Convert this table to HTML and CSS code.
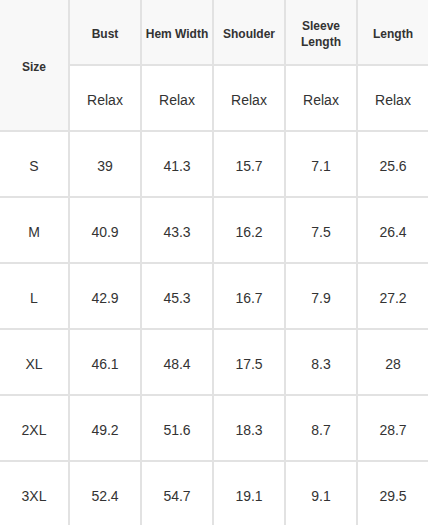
FILE: index.html
```html
<!DOCTYPE html>
<html>
<head>
<meta charset="utf-8">
<link rel="stylesheet" href="styles.css">
</head>
<body>
<table class="size-table">
  <colgroup>
    <col class="col-size">
    <col class="col-m"><col class="col-m"><col class="col-m"><col class="col-m"><col class="col-last">
  </colgroup>
  <thead>
    <tr>
      <th class="head size-head" rowspan="2">Size</th>
      <th class="head">Bust</th>
      <th class="head">Hem Width</th>
      <th class="head">Shoulder</th>
      <th class="head">Sleeve<br>Length</th>
      <th class="head last">Length</th>
    </tr>
    <tr>
      <td>Relax</td><td>Relax</td><td>Relax</td><td>Relax</td><td class="last">Relax</td>
    </tr>
  </thead>
  <tbody>
    <tr><td>S</td><td>39</td><td>41.3</td><td>15.7</td><td>7.1</td><td class="last">25.6</td></tr>
    <tr><td>M</td><td>40.9</td><td>43.3</td><td>16.2</td><td>7.5</td><td class="last">26.4</td></tr>
    <tr><td>L</td><td>42.9</td><td>45.3</td><td>16.7</td><td>7.9</td><td class="last">27.2</td></tr>
    <tr><td>XL</td><td>46.1</td><td>48.4</td><td>17.5</td><td>8.3</td><td class="last">28</td></tr>
    <tr><td>2XL</td><td>49.2</td><td>51.6</td><td>18.3</td><td>8.7</td><td class="last">28.7</td></tr>
    <tr><td>3XL</td><td>52.4</td><td>54.7</td><td>19.1</td><td>9.1</td><td class="last">29.5</td></tr>
  </tbody>
</table>
</body>
</html>
```
FILE: styles.css
```css
html, body {
  margin: 0;
  padding: 0;
  background: #fff;
}
body {
  font-family: "Liberation Sans", Arial, sans-serif;
  color: #333;
}
.size-table {
  table-layout: fixed;
  border-collapse: separate;
  border-spacing: 0;
  width: 428px;
}
.col-size { width: 70px; }
.col-m { width: 72px; }
.col-last { width: 70px; }
.size-table th,
.size-table td {
  box-sizing: border-box;
  height: 66px;
  padding: 4px 0 0;
  text-align: center;
  vertical-align: middle;
  border-right: 2px solid #e2e2e2;
  border-bottom: 2px solid #e2e2e2;
  font-size: 14px;
  font-weight: normal;
}
.size-table .last {
  border-right: none;
}
.size-table .head {
  background: #f8f8f8;
  font-size: 12px;
  font-weight: bold;
  line-height: 16px;
}
.size-table .size-head {
  height: 132px;
}
```
